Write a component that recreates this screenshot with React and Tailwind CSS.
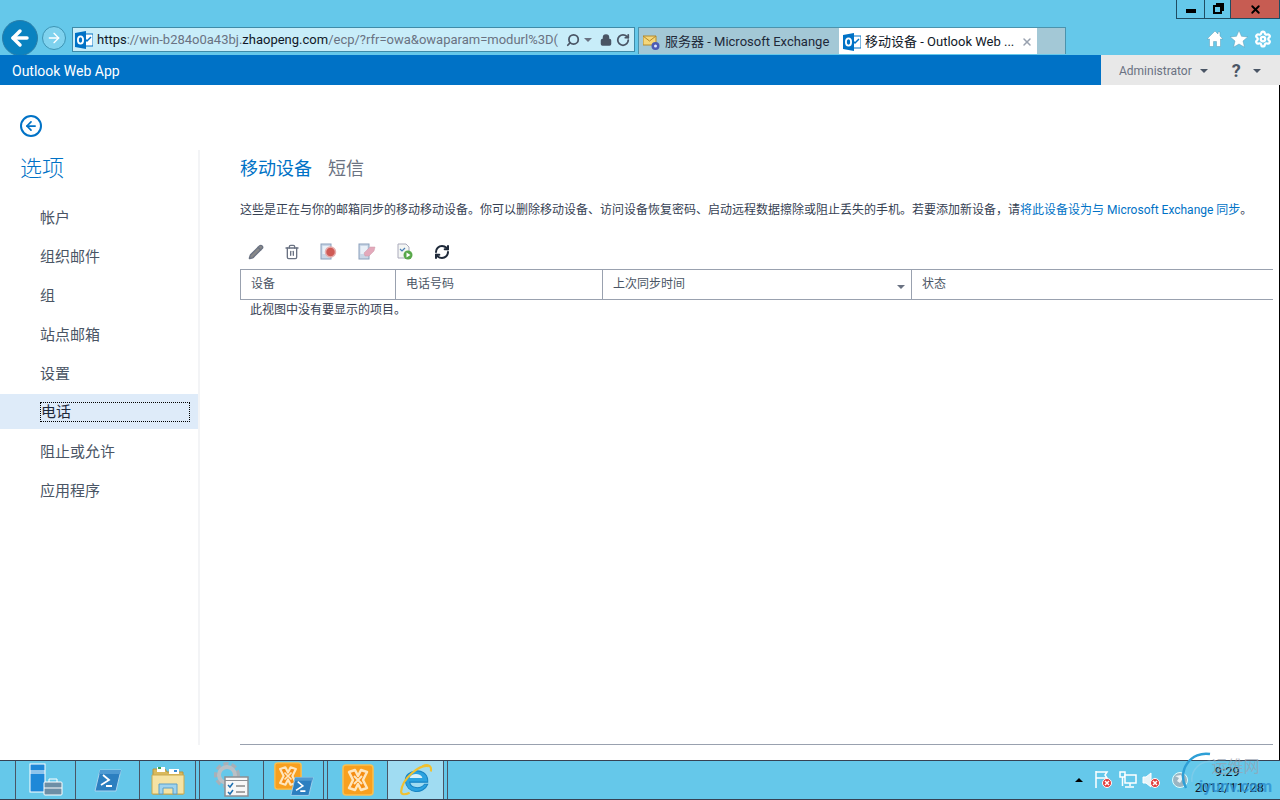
import { Settings, Search, Lock, RotateCw, X, ArrowLeft, ArrowRight, Pencil, Trash2, RefreshCw } from 'lucide-react';

const OutlookIcon = () => (
  <svg width="18" height="18" viewBox="0 0 18 18" className="shrink-0">
    <rect x="8" y="3" width="10" height="12" fill="#fff" stroke="#0072c6" />
    <path d="M10 8l2 2 4-4" fill="none" stroke="#0072c6" strokeWidth="1.5" />
    <path d="M0 2l11-2v18L0 16z" fill="#0072c6" />
    <ellipse cx="5.5" cy="9" rx="2.6" ry="3.6" fill="none" stroke="#fff" strokeWidth="1.8" />
  </svg>
);

const ExchangeTabIcon = () => (
  <svg width="18" height="18" viewBox="0 0 18 18" className="shrink-0">
    <path d="M0 3h13v9H0z" fill="#f5d77a" stroke="#b48a2c" />
    <path d="M0 3l6.5 5L13 3" fill="none" stroke="#b48a2c" />
    <circle cx="12.500" cy="13" r="4" fill="#4a5bb5" />
    <circle cx="12.500" cy="13" r="1.500" fill="#dfe4ff" />
  </svg>
);

const HomeIcon = () => (
  <svg width="18" height="18" viewBox="0 0 18 18">
    <path d="M9 1L1 9h2.500v7.500h4v-5h3v5h4V9H17l-3-3V2h-2v2z" fill="#fff" stroke="#5f9db5" strokeWidth="0.500" />
  </svg>
);

const StarIcon = () => (
  <svg width="18" height="18" viewBox="0 0 18 18">
    <path d="M9 .5l2.500 5.800 6.300.6-4.800 4.100 1.500 6.200L9 14l-5.500 3.200L5 11 .2 6.900l6.300-.6z" fill="#fff" stroke="#5f9db5" strokeWidth="0.500" />
  </svg>
);

const PhoneBase = () => (
  <>
    <rect x="1" y="1" width="10" height="15" fill="#c9d6e6" stroke="#8ba0bb" />
    <rect x="2.500" y="3" width="7" height="8" fill="#e9f0f8" />
  </>
);

const WipeIcon = () => (
  <svg width="18" height="18" viewBox="0 0 18 18">
    <PhoneBase />
    <circle cx="10.500" cy="9" r="5" fill="#cf5a55" stroke="#e6aeae" strokeWidth="1.500" />
  </svg>
);

const EraseIcon = () => (
  <svg width="18" height="18" viewBox="0 0 18 18">
    <PhoneBase />
    <path d="M6 10l6-6h5l-1 4-5 5H7z" fill="#e3a9bb" stroke="#cc9aa8" strokeWidth="0.500" />
  </svg>
);

const ExportIcon = () => (
  <svg width="18" height="18" viewBox="0 0 18 18">
    <path d="M2 1h8l3 3v11H2z" fill="#f4f6f4" stroke="#aab" />
    <path d="M4 6l2 2 3-3" fill="none" stroke="#4a7fb5" strokeWidth="1.200" />
    <circle cx="12" cy="12" r="4.500" fill="#58a84a" />
    <path d="M10.500 9.500l4 2.500-4 2.500z" fill="#fff" />
  </svg>
);

const ServerManagerIcon = () => (
  <svg width="34" height="34" viewBox="0 0 34 34">
    <rect x="1" y="1" width="15" height="28" fill="#1e88d8" stroke="#fff" />
    <path d="M1 8h15M1 10h15" stroke="#fff" />
    <rect x="15" y="19" width="18" height="13" rx="1" fill="#6d8fa6" stroke="#fff" />
    <path d="M20 19v-3h8v3M15 25h18" fill="none" stroke="#fff" />
  </svg>
);

const PowerShellIcon = ({ size = 28 }) => (
  <svg width={size} height={size} viewBox="0 0 28 28">
    <path d="M6 4h21l-5 21H1z" fill="#2c7fc0" stroke="#a9d4ee" />
    <path d="M6 4h21l-1 4H5z" fill="#4e9ad2" />
    <path d="M9 9l6 5-8 5M12 20h6" fill="none" stroke="#fff" strokeWidth="1.800" />
  </svg>
);

const FolderIcon = () => (
  <svg width="34" height="34" viewBox="0 0 34 34">
    <path d="M2 6h12l2 3h16v22H2z" fill="#d9b95c" stroke="#b8963c" />
    <rect x="6" y="4" width="8" height="5" fill="#fff" />
    <rect x="7" y="4" width="3" height="2" fill="#3aa655" />
    <rect x="18" y="6" width="10" height="5" fill="#fff" />
    <rect x="23" y="7" width="3" height="2" fill="#3a8ad6" />
    <path d="M1 12h32v19H1z" fill="#f5e3a4" stroke="#c9a94f" />
    <path d="M8 31V21h18v10h-4v-6H12v6z" fill="#9fd3ee" stroke="#5a9fc9" />
  </svg>
);

const TasksIcon = () => (
  <svg width="36" height="36" viewBox="0 0 36 36">
    <circle cx="13" cy="13" r="11" fill="none" stroke="#a8b0b8" strokeWidth="4" strokeDasharray="5 3" />
    <circle cx="13" cy="13" r="8" fill="none" stroke="#b9c0c6" strokeWidth="4" />
    <rect x="11" y="15" width="23" height="19" fill="#f7f7f7" stroke="#8b8f94" strokeWidth="1.500" />
    <path d="M11 18.500h23" stroke="#8b8f94" />
    <path d="M14 23l2 2 3-4M14 30l2 2 3-4" fill="none" stroke="#1c6fb0" strokeWidth="1.500" />
    <path d="M22 24h9M22 30h9" stroke="#555" />
  </svg>
);

const ExchangeIcon = ({ size = 32 }) => (
  <svg width={size} height={size} viewBox="0 0 32 32">
    <rect x="1" y="1" width="30" height="30" rx="3" fill="#f8a01f" stroke="#fbc04e" strokeWidth="1.500" />
    <path d="M7 8l6-2 3 6 3-6 6 2-4 8 4 8-6 2-3-6-3 6-6-2 4-8z" fill="#f58d12" stroke="#ffe6bd" strokeWidth="2.500" strokeLinejoin="round" />
    <path d="M12 12l8 8M20 12l-8 8" stroke="#ffe6bd" strokeWidth="2" />
  </svg>
);

const ExchangeShellIcon = () => (
  <div className="relative h-9 w-10">
    <ExchangeIcon size={28} />
    <div className="absolute right-0 bottom-0">
      <PowerShellIcon size={24} />
    </div>
  </div>
);

const IEIcon = () => (
  <svg width="34" height="34" viewBox="0 0 32 32">
    <path d="M27 18H10c1 6 10 7 14 2h3c-4 10-20 9-21-3C5 6 26 3 27 16z" fill="#2ba3e0" stroke="#1784c4" />
    <path d="M10 14h12c-1-5-11-5-12 0z" fill="#d9f1fb" />
    <path d="M28 3C20 1 3 14 2 27c0 3 4 3 8 1M22 3c5-2 9-1 8 5" fill="none" stroke="#f0c030" strokeWidth="2" />
  </svg>
);

const FlagIcon = () => (
  <svg width="22" height="20" viewBox="0 0 22 20">
    <path d="M3 1v17M3 2h11l-2 3 2 3H3" fill="none" stroke="#fff" strokeWidth="1.500" />
    <circle cx="14" cy="13" r="4.500" fill="#e23b3b" stroke="#fff" />
    <path d="M12 11l4 4M16 11l-4 4" stroke="#fff" strokeWidth="1.500" />
  </svg>
);

const NetworkIcon = () => (
  <svg width="18" height="18" viewBox="0 0 18 18">
    <rect x="1" y="1" width="5" height="5" fill="#65c8ea" stroke="#fff" strokeWidth="1.500" />
    <rect x="6" y="4" width="11" height="8" fill="#65c8ea" stroke="#fff" strokeWidth="1.500" />
    <path d="M3.500 6v9M11 12v3M6 16h9" fill="none" stroke="#fff" strokeWidth="1.500" />
  </svg>
);

const SpeakerIcon = () => (
  <svg width="22" height="20" viewBox="0 0 22 20">
    <path d="M2 7h3l5-4v14l-5-4H2z" fill="#e8f4f8" stroke="#fff" />
    <circle cx="14" cy="13" r="4.500" fill="#e23b3b" stroke="#fff" />
    <path d="M12 11l4 4M16 11l-4 4" stroke="#fff" strokeWidth="1.500" />
  </svg>
);

const GlobeIcon = () => (
  <svg width="18" height="18" viewBox="0 0 18 18">
    <circle cx="9" cy="9" r="7.500" fill="#9ab5c2" stroke="#dff" />
    <path d="M4 5l4 2-2 3 3 2 3-5-2-3zM12 11l2 1-2 3z" fill="#e8f2f5" />
  </svg>
);

const Caret = ({ className }) => (
  <span className={`h-0 w-0 border-x-4 border-t-4 border-x-transparent ${className}`} />
);

const navItems = ['帐户', '组织邮件', '组', '站点邮箱', '设置', '电话', '阻止或允许', '应用程序'];
const columns = [
  { label: '设备', width: 'w-[155px]' },
  { label: '电话号码', width: 'w-[207px]' },
  { label: '上次同步时间', width: 'w-[309px]', sorted: true },
  { label: '状态', width: 'flex-1' },
];

const BrowserChrome = () => (
  <div className="h-[55px] shrink-0 bg-[#65c8ea]">
    <div className="flex h-5 justify-end">
      <div className="flex h-[19px] border-x border-b border-[#1f4d63]">
        <div className="flex w-7 items-center justify-center border-r border-[#1f4d63]">
          <div className="mt-1 h-1 w-2.5 bg-black" />
        </div>
        <div className="flex w-[26px] items-center justify-center border-r border-[#1f4d63]">
          <div className="relative h-[9px] w-[9px] border-2 border-black">
            <div className="absolute -top-1 -right-1 h-2 w-2 border-t-2 border-r-2 border-black" />
          </div>
        </div>
        <div className="flex w-12 items-center justify-center bg-[#c75c52]">
          <X size={13} strokeWidth={3.500} className="text-black" />
        </div>
      </div>
    </div>
    <div className="flex h-[35px] items-start">
      <div className="flex items-center pl-0.5">
        <div className="flex h-9 w-9 items-center justify-center rounded-full border border-[#2b7ea8] bg-[#0a82c0]">
          <ArrowLeft size={24} strokeWidth={3.500} className="text-white" />
        </div>
        <div className="ml-1 flex h-6 w-6 items-center justify-center rounded-full border border-[#3d94b4] bg-[#7fd2ee]">
          <ArrowRight size={16} className="text-white" />
        </div>
      </div>
      <div className="mt-[7px] ml-1.5 flex h-[25px] w-[563px] items-center border border-[#3f8ba8] bg-[#c8edf9] pr-1 pl-0.5">
        <OutlookIcon />
        <div className="ml-1 flex-1 overflow-hidden text-[13px] whitespace-nowrap text-gray-500">
          <span className="text-gray-900">https</span>://win-b284o0a43bj.<span className="text-gray-900">zhaopeng.com</span>/ecp/?rfr=owa&amp;owaparam=modurl%3D(
        </div>
        <Search size={14} strokeWidth={3} className="ml-1 -scale-x-100 text-gray-600" />
        <Caret className="ml-1 border-t-gray-500" />
        <Lock size={12} strokeWidth={3} fill="#4b5563" className="ml-2 text-gray-600" />
        <RotateCw size={14} strokeWidth={3} className="ml-1 text-gray-600" />
      </div>
      <div className="mt-[7px] ml-[3px] flex h-[27px] border-x border-t border-[#4b93ad] bg-[#a3c8d6]">
        <div className="flex w-[200px] items-center gap-1 pt-0.5 pl-1 text-[13px] whitespace-nowrap text-gray-800">
          <ExchangeTabIcon />
          <span>服务器 - Microsoft Exchange</span>
        </div>
        <div className="flex w-[198px] items-center gap-1 bg-white px-1 pt-0.5 text-[13px] whitespace-nowrap text-gray-900">
          <OutlookIcon />
          <span className="flex-1">移动设备 - Outlook Web ...</span>
          <X size={12} strokeWidth={3} className="text-gray-400" />
        </div>
        <div className="w-7" />
      </div>
      <div className="mt-2.5 ml-auto flex items-center gap-1.5 pr-2">
        <HomeIcon />
        <StarIcon />
        <Settings size={18} strokeWidth={3} className="text-white" />
      </div>
    </div>
  </div>
);

const TopBar = () => (
  <div className="flex h-[30px] shrink-0 items-center bg-[#0072c6]">
    <span className="pt-0.5 pl-3 text-sm text-white">Outlook Web App</span>
    <div className="ml-auto flex h-full w-[179px] items-center bg-[#e8e8e8] pt-0.5 pl-[18px] text-xs text-gray-500">
      <span>Administrator</span>
      <Caret className="ml-2 border-t-gray-600" />
      <span className="ml-6 text-lg font-bold text-gray-600">?</span>
      <Caret className="ml-3 border-t-gray-600" />
    </div>
  </div>
);

const Sidebar = () => (
  <div className="flex w-50 shrink-0 flex-col">
    <div className="h-[65px] pt-[30px] pl-5">
      <div className="flex h-[22px] w-[22px] items-center justify-center rounded-full border-2 border-[#0072c6]">
        <ArrowLeft size={14} strokeWidth={3} className="text-[#0072c6]" />
      </div>
    </div>
    <div className="mb-[15px] flex-1 border-r-2 border-gray-100">
      <h1 className="pt-0.5 pl-5 text-[22px] font-light text-[#0072c6]">选项</h1>
      <ul className="mt-3.5">
        {navItems.map((item) =>
          item === '电话' ? (
            <li key={item} className="mb-1 flex h-[35px] items-center bg-[#deebf9] pl-10 text-[15px] text-gray-800">
              <span className="mr-2 flex-1 border border-dotted border-black leading-[18px]">{item}</span>
            </li>
          ) : (
            <li key={item} className="flex h-[39px] items-center pl-10 text-[15px] text-gray-600">{item}</li>
          )
        )}
      </ul>
    </div>
  </div>
);

const Content = () => (
  <div className="flex min-w-0 flex-1 flex-col pt-[65px] pr-1.5 pl-10">
    <div className="flex h-9 items-center gap-4 pt-0.5 text-lg">
      <span className="text-[#0072c6]">移动设备</span>
      <span className="text-gray-500">短信</span>
    </div>
    <p className="mt-4 text-xs whitespace-nowrap text-gray-700">
      这些是正在与你的邮箱同步的移动移动设备。你可以删除移动设备、访问设备恢复密码、启动远程数据擦除或阻止丢失的手机。若要添加新设备，请
      <span className="text-[#0072c6]">将此设备设为与 Microsoft Exchange 同步</span>。
    </p>
    <div className="mt-6 flex h-5 items-center gap-5 pl-2">
      <Pencil size={16} fill="#888" className="text-gray-500" />
      <Trash2 size={16} className="text-gray-500" />
      <WipeIcon />
      <EraseIcon />
      <ExportIcon />
      <RefreshCw size={16} strokeWidth={3} className="text-gray-800" />
    </div>
    <div className="mt-[7px] flex h-[31px] border-y border-l border-gray-400 text-xs text-gray-600">
      {columns.map((col) => (
        <div key={col.label} className={`relative flex items-center border-r border-gray-400 pb-0.5 pl-2.5 last:border-r-0 ${col.width}`}>
          {col.label}
          {col.sorted && <Caret className="absolute right-1.5 bottom-2.5 border-t-gray-500" />}
        </div>
      ))}
    </div>
    <p className="mt-0.5 pl-2.5 text-xs text-gray-700">此视图中没有要显示的项目。</p>
    <div className="mt-auto mb-[15px] border-t border-gray-400" />
  </div>
);

const Taskbar = () => (
  <div className="relative flex h-10 shrink-0 border-y border-gray-700 bg-[#65c8ea]">
    <div className="w-4 border-r border-gray-600" />
    <div className="flex w-15 items-center justify-center border-r border-gray-600"><ServerManagerIcon /></div>
    <div className="flex w-16 items-center justify-center border-r border-gray-600"><PowerShellIcon /></div>
    <div className="flex w-14 items-center justify-center border-r border-gray-600"><FolderIcon /></div>
    <div className="w-1 border-r border-gray-600" />
    <div className="flex w-16 items-center justify-center border-r border-gray-600"><TasksIcon /></div>
    <div className="flex w-15 items-center justify-center border-r border-gray-600"><ExchangeShellIcon /></div>
    <div className="w-1 border-r border-gray-600" />
    <div className="flex w-15 items-center justify-center border-r border-gray-600"><ExchangeIcon /></div>
    <div className="flex w-14 items-center justify-center border-r border-gray-600 bg-[#a0dcf2]"><IEIcon /></div>
    <div className="w-1 border-r border-gray-600" />
    <div className="ml-auto flex items-center pr-4">
      <span className="mr-2.5 h-0 w-0 border-x-4 border-b-4 border-x-transparent border-b-black" />
      <div className="flex items-center gap-1">
        <FlagIcon />
        <NetworkIcon />
        <SpeakerIcon />
      </div>
      <div className="ml-2"><GlobeIcon /></div>
      <div className="ml-1.5 text-center text-[13px] leading-4 text-gray-900">
        <div className="pr-1">9:29</div>
        <div className="whitespace-nowrap">2012/11/28</div>
      </div>
    </div>
    <svg width="48" height="48" viewBox="0 0 48 48" className="pointer-events-none absolute right-13 -bottom-px">
      <path d="M30 2A23 23 0 0 0 6 36" fill="none" stroke="#2e9fd6" strokeWidth="2.500" />
      <path d="M34 10A18 18 0 0 0 12 30" fill="none" stroke="#7ccbe9" strokeWidth="1.500" />
    </svg>
    <div className="pointer-events-none absolute right-2 bottom-1 text-center">
      <div className="text-base leading-4 text-gray-400/70">运维网</div>
      <div className="mt-1 text-base leading-4 font-bold text-[#2b8fd0]/80">iyunv.com</div>
    </div>
  </div>
);

export default function App() {
  return (
    <div
      className="flex h-screen flex-col overflow-hidden bg-white"
      style={{ fontFamily: 'Roboto, "Noto Sans CJK SC", sans-serif' }}
    >
      <BrowserChrome />
      <TopBar />
      <div className="flex min-h-0 flex-1 border-r border-black">
        <Sidebar />
        <Content />
      </div>
      <Taskbar />
    </div>
  );
}
